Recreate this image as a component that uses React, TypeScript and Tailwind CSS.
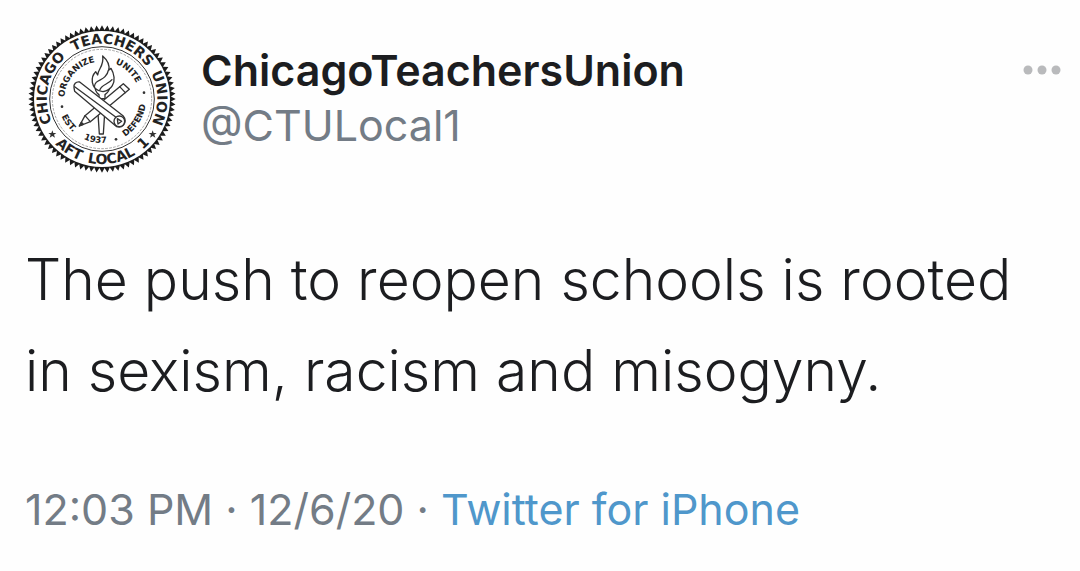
import { useId } from 'react'

type ArcTextProps = {
  text: string
  radius: number
  angle: number
  size: number
  below?: boolean
}

// angle is clockwise from twelve o'clock, at the middle of the text
function ArcText({ text, radius, angle, size, below = false }: ArcTextProps) {
  const id = useId()
  const sweep = below ? 0 : 1
  return (
    <g transform={`rotate(${below ? angle - 180 : angle})`}>
      <path id={id} d={`M ${-radius} 0 A ${radius} ${radius} 0 0 ${sweep} ${radius} 0`} fill="none" />
      <text fontSize={size} textAnchor="middle" className="fill-[#222222] font-bold">
        <textPath href={`#${id}`} startOffset="50%">{text}</textPath>
      </text>
    </g>
  )
}

const outer = [
  { text: 'CHICAGO', angle: -78 },
  { text: 'TEACHERS', angle: 12 },
  { text: 'UNION', angle: 89 },
]

const outerBelow = [
  { text: 'AFT', angle: 213 },
  { text: 'LOCAL', angle: 171 },
  { text: '1', angle: 137 },
]

const inner = [
  { text: 'ORGANIZE', angle: -49 },
  { text: 'UNITE', angle: 43 },
]

const innerBelow = [
  { text: 'EST.', angle: 234 },
  { text: '1937', angle: 189 },
  { text: 'DEFEND', angle: 123 },
]

const TEETH = 84

const edge = Array.from({ length: TEETH * 2 }, (_, i) => {
  const r = i % 2 ? 207 : 221
  const a = (i * Math.PI) / TEETH
  return `${(r * Math.sin(a)).toFixed(1)},${(-r * Math.cos(a)).toFixed(1)}`
}).join(' ')

function Seal() {
  return (
    <svg viewBox="-225 -225 450 450" className="size-[150px] shrink-0 font-['DejaVu_Sans',sans-serif]" role="img" aria-label="Chicago Teachers Union seal">
      {/* Rings */}
      <polygon points={edge} fill="#1c1c1c" />
      <circle r="204" fill="#fff" />
      <circle r="157" fill="none" stroke="#333" strokeWidth="3" />
      <circle r="149" fill="none" stroke="#777" strokeWidth="2" strokeDasharray="8 4" />

      {/* Lettering */}
      {outer.map((w) => <ArcText key={w.text} {...w} radius={166} size={42} />)}
      {outerBelow.map((w) => <ArcText key={w.text} {...w} radius={195} size={42} below />)}
      {inner.map((w) => <ArcText key={w.text} {...w} radius={113} size={26} />)}
      {innerBelow.map((w) => <ArcText key={w.text} {...w} radius={132} size={26} below />)}

      <g transform="translate(-245 -242)" fill="#333">
        <circle cx="125" cy="265" r="4" />
        <circle cx="287" cy="363" r="4" />
        <circle cx="371" cy="223" r="4" />
        <path d="M96 336l3 8 9 0-7 5 3 9-8-5-8 5 3-9-7-5 9 0z" />
        <path d="M397 336l3 8 9 0-7 5 3 9-8-5-8 5 3-9-7-5 9 0z" />
      </g>

      <g transform="translate(-245 -242)" fill="#fff" stroke="#333" strokeWidth="4" strokeLinejoin="round" strokeLinecap="round">
        {/* Torch */}
        <path d="M233 285h20l-4 62h-12z" />
        <path d="M224 203h44c0 14-8 22-14 26v12h-18v-12c-6-4-12-12-12-26z" />
        <path d="M247 113c16 14 22 27 18 43l7-6c10 16 13 38 4 52-6 10-16 16-28 18-18-1-30-13-32-28-2-14 3-25 10-32l6 10c1-19 20-27 15-57z" />
        <path d="M222 207c0-22 22-20 32-32 6-7 9-12 10-19M238 216c5-18 24-16 37-32" fill="none" />

        {/* Pencil */}
        <path d="M309 196l18 17-117 97-33 13 17-31z" />
        <path d="M194 292l16 18M298 205l17 18" fill="none" />
        <path d="M177 323l6-11 6 6z" fill="#333" />

        {/* Rolled diploma */}
        <path d="M161 208c-2-10 6-19 17-17l130 101c8 9 9 21 1 29-7 7-19 7-26-1L163 219z" />
        <path d="M163 205l126 93" fill="none" />
        <circle cx="297" cy="309" r="16" />
        <path d="M291 301l13 8-11 8z" fill="none" />
      </g>
    </svg>
  )
}

export default function App() {
  return (
    <article className="min-h-screen bg-[#fefefe] px-[25px] pt-6 pb-6 font-['Inter',sans-serif] text-[#1c1d20]">
      <header className="flex items-start pl-0.5">
        <Seal />
        <div className="ml-6 pt-5">
          <h1 className="text-[43px] leading-[52px] font-semibold">ChicagoTeachersUnion</h1>
          <p className="text-[43px] leading-[58px] text-[#737c86]">@CTULocal1</p>
        </div>
        <button type="button" aria-label="More" className="mt-10 -mr-1.5 ml-auto">
          <svg viewBox="0 0 38 12" className="h-3 w-[38px] fill-[#b9babc]">
            <circle cx="5" cy="6" r="4.5" />
            <circle cx="19" cy="6" r="4.5" />
            <circle cx="33" cy="6" r="4.5" />
          </svg>
        </button>
      </header>

      <p className="mt-15 text-[57px] leading-[91px] font-light">
        The push to reopen schools is rooted in sexism, racism and misogyny.
      </p>

      <footer className="mt-16 text-[43px] leading-[58px] text-[#737c86]">
        <time dateTime="2020-12-06T12:03">12:03 PM · 12/6/20</time>
        {' · '}
        <a href="#source" className="text-[#4f97cb]">Twitter for iPhone</a>
      </footer>
    </article>
  )
}
